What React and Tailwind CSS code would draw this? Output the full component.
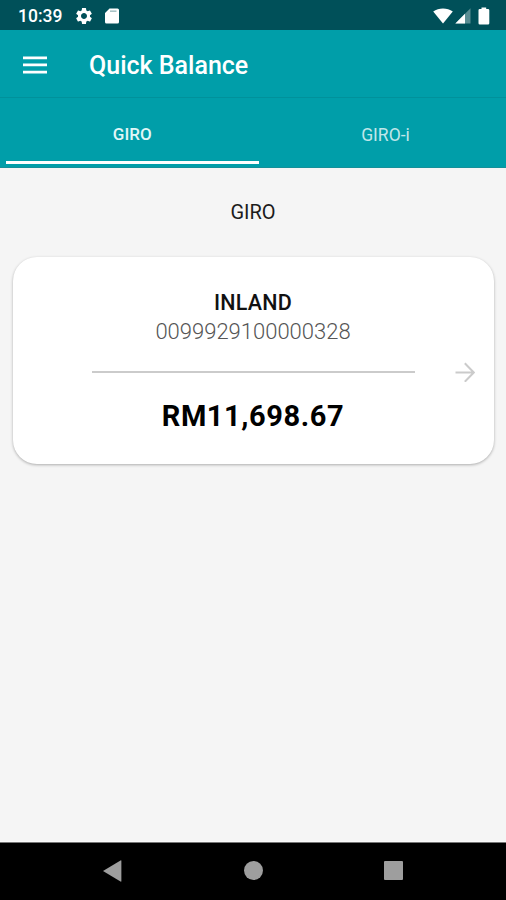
import React, { useState } from 'react';

const tabs = ['GIRO', 'GIRO-i'];

const account = {
  name: 'INLAND',
  number: '0099929100000328',
  balance: 'RM11,698.67',
};

const App = () => {
  const [active, setActive] = useState('GIRO');

  return (
    <div className="flex flex-col w-full h-[900px] bg-[#f5f5f5] font-['Roboto',sans-serif] text-black overflow-hidden">
      <StatusBar />

      {/* App bar */}
      <header className="flex items-center h-[68px] shrink-0 bg-[#009ea9] border-b border-[#00919b] pl-[23px] pt-[2px] text-white">
        <button aria-label="Menu">
          <svg width="24" height="18" viewBox="0 0 24 18" fill="currentColor">
            <path d="M0 .5h24v2.7H0zM0 7.6h24v2.7H0zM0 14.7h24v2.7H0z" />
          </svg>
        </button>
        <h1 className="ml-[42px] mt-[3px] text-[25px] leading-[30px] font-medium whitespace-nowrap">Quick Balance</h1>
      </header>

      {/* Tabs */}
      <nav className="grid grid-cols-[253.5px_1fr] h-[70px] shrink-0 bg-[#009ea9] border-b border-[#149099] pl-[5.5px]">
        {tabs.map((tab) => (
          <button
            key={tab}
            onClick={() => setActive(tab)}
            className={
              tab === active
                ? 'h-[66px] border-b-[3px] border-white text-[17px] font-medium text-[#e0f6f7]'
                : 'h-[66px] border-b-[3px] border-transparent pl-[6px] text-[17.5px] text-[#c0e6e9]'
            }
          >
            <span className="block pt-[11px]">{tab}</span>
          </button>
        ))}
      </nav>

      {/* Account list */}
      <main className="flex-1 px-[12.5px] border-b border-[#fafafa]">
        <h2 className="pt-[32px] h-[89px] text-center text-[20px] leading-[24px] text-[#1c1c1c]">GIRO</h2>
        <AccountCard {...account} />
      </main>

      <NavBar />
    </div>
  );
};

const AccountCard = ({ name, number, balance }) => (
  <section className="relative h-[207px] rounded-[24px] bg-white px-[79px] pt-[32px] text-center shadow-[0_1px_3px_rgba(0,0,0,0.3)]">
    <p className="text-[21.5px] leading-[27px] font-medium tracking-[0.2px] text-[#111]">{name}</p>
    <p className="pt-[1px] text-[22px] leading-[30px] font-light text-[#555]">{number}</p>
    <hr className="mt-[24px] border-0 h-[2px] bg-[#cbcbcb]" />
    <p className="mt-[26px] text-[29px] leading-[34px] font-bold tracking-[0.6px] whitespace-nowrap">{balance}</p>
    <button aria-label="Open account" className="absolute right-[19px] top-[105px] text-[#cbcbcb]">
      <svg width="20" height="20" viewBox="0 0 20 20" fill="none" stroke="currentColor" strokeWidth="2">
        <path d="M.5 10.5h18M9.8 1.2l9 9.3-9 9.3" />
      </svg>
    </button>
  </section>
);

const StatusBar = () => (
  <div className="flex items-center h-[30px] shrink-0 bg-[#005059] pl-[18px] pr-[16px] text-white">
    <span className="w-[44px] pt-[3px] text-[17.5px] leading-none font-medium">10:39</span>
    <svg className="ml-[12px] mt-px" width="20" height="20" viewBox="0 0 24 24" fill="currentColor">
      <path d="M19.14 12.94c.04-.3.06-.61.06-.94 0-.32-.02-.64-.07-.94l2.03-1.58a.49.49 0 0 0 .12-.61l-1.92-3.32a.488.488 0 0 0-.59-.22l-2.39.96c-.5-.38-1.03-.7-1.62-.94l-.36-2.54a.484.484 0 0 0-.48-.41h-3.84c-.24 0-.43.17-.47.41l-.36 2.54c-.59.24-1.13.57-1.62.94l-2.39-.96c-.22-.08-.47 0-.59.22L2.74 8.87c-.12.21-.08.47.12.61l2.03 1.58c-.05.3-.09.63-.09.94s.02.64.07.94l-2.03 1.58a.49.49 0 0 0-.12.61l1.92 3.32c.12.22.37.29.59.22l2.39-.96c.5.38 1.03.7 1.62.94l.36 2.54c.05.24.24.41.48.41h3.84c.24 0 .44-.17.47-.41l.36-2.54c.59-.24 1.13-.56 1.62-.94l2.39.96c.22.08.47 0 .59-.22l1.92-3.32c.12-.22.07-.47-.12-.61l-2.01-1.58zM12 15.6c-1.98 0-3.6-1.62-3.6-3.6s1.62-3.6 3.6-3.6 3.6 1.62 3.6 3.6-1.62 3.6-3.6 3.6z" />
    </svg>
    <svg className="ml-[10.5px] mt-px" width="14" height="16" viewBox="0 0 14 16">
      <path d="M4.5.5h8A1.5 1.5 0 0 1 14 2v12a1.5 1.5 0 0 1-1.5 1.5h-11A1.5 1.5 0 0 1 0 14V5z" fill="currentColor" />
      <path d="M5 3.2h6.5" stroke="#a9c3c6" strokeWidth="1.6" />
    </svg>
    <svg className="ml-auto mt-px" width="20" height="16" viewBox="0 0 20 16" fill="currentColor">
      <path d="M10 15.6.2 3.5C3 1.2 6.4.4 10 .4s7 .8 9.8 3.1z" />
    </svg>
    <svg className="ml-[2px] mt-px" width="16" height="16" viewBox="0 0 16 16" fill="currentColor">
      <path d="M15.5.3v15.2H.3z" opacity=".35" />
      <path d="M10 5.8v9.7H.3z" />
    </svg>
    <svg className="ml-[7px] mt-px" width="12" height="18" viewBox="0 0 12 18" fill="currentColor">
      <path d="M3.5 2V.5h4.7V2h1.8a1.3 1.3 0 0 1 1.3 1.3v13a1.3 1.3 0 0 1-1.3 1.3H1.8a1.3 1.3 0 0 1-1.3-1.3v-13A1.3 1.3 0 0 1 1.8 2z" />
    </svg>
  </div>
);

const NavBar = () => (
  <div className="flex items-center h-[58px] shrink-0 bg-black border-t border-[#777] pl-[103px] pb-[2px] text-[#9e9e9e]">
    <svg width="19" height="22" viewBox="0 0 19 22" fill="currentColor">
      <path d="M0 11 17.5.5a.6.6 0 0 1 .9.5v20a.6.6 0 0 1-.9.5z" />
    </svg>
    <span className="ml-[122px] size-[19px] rounded-full bg-[#9e9e9e]" />
    <span className="ml-[121px] size-[19px] rounded-[1px] bg-[#9e9e9e]" />
  </div>
);

export default App;
